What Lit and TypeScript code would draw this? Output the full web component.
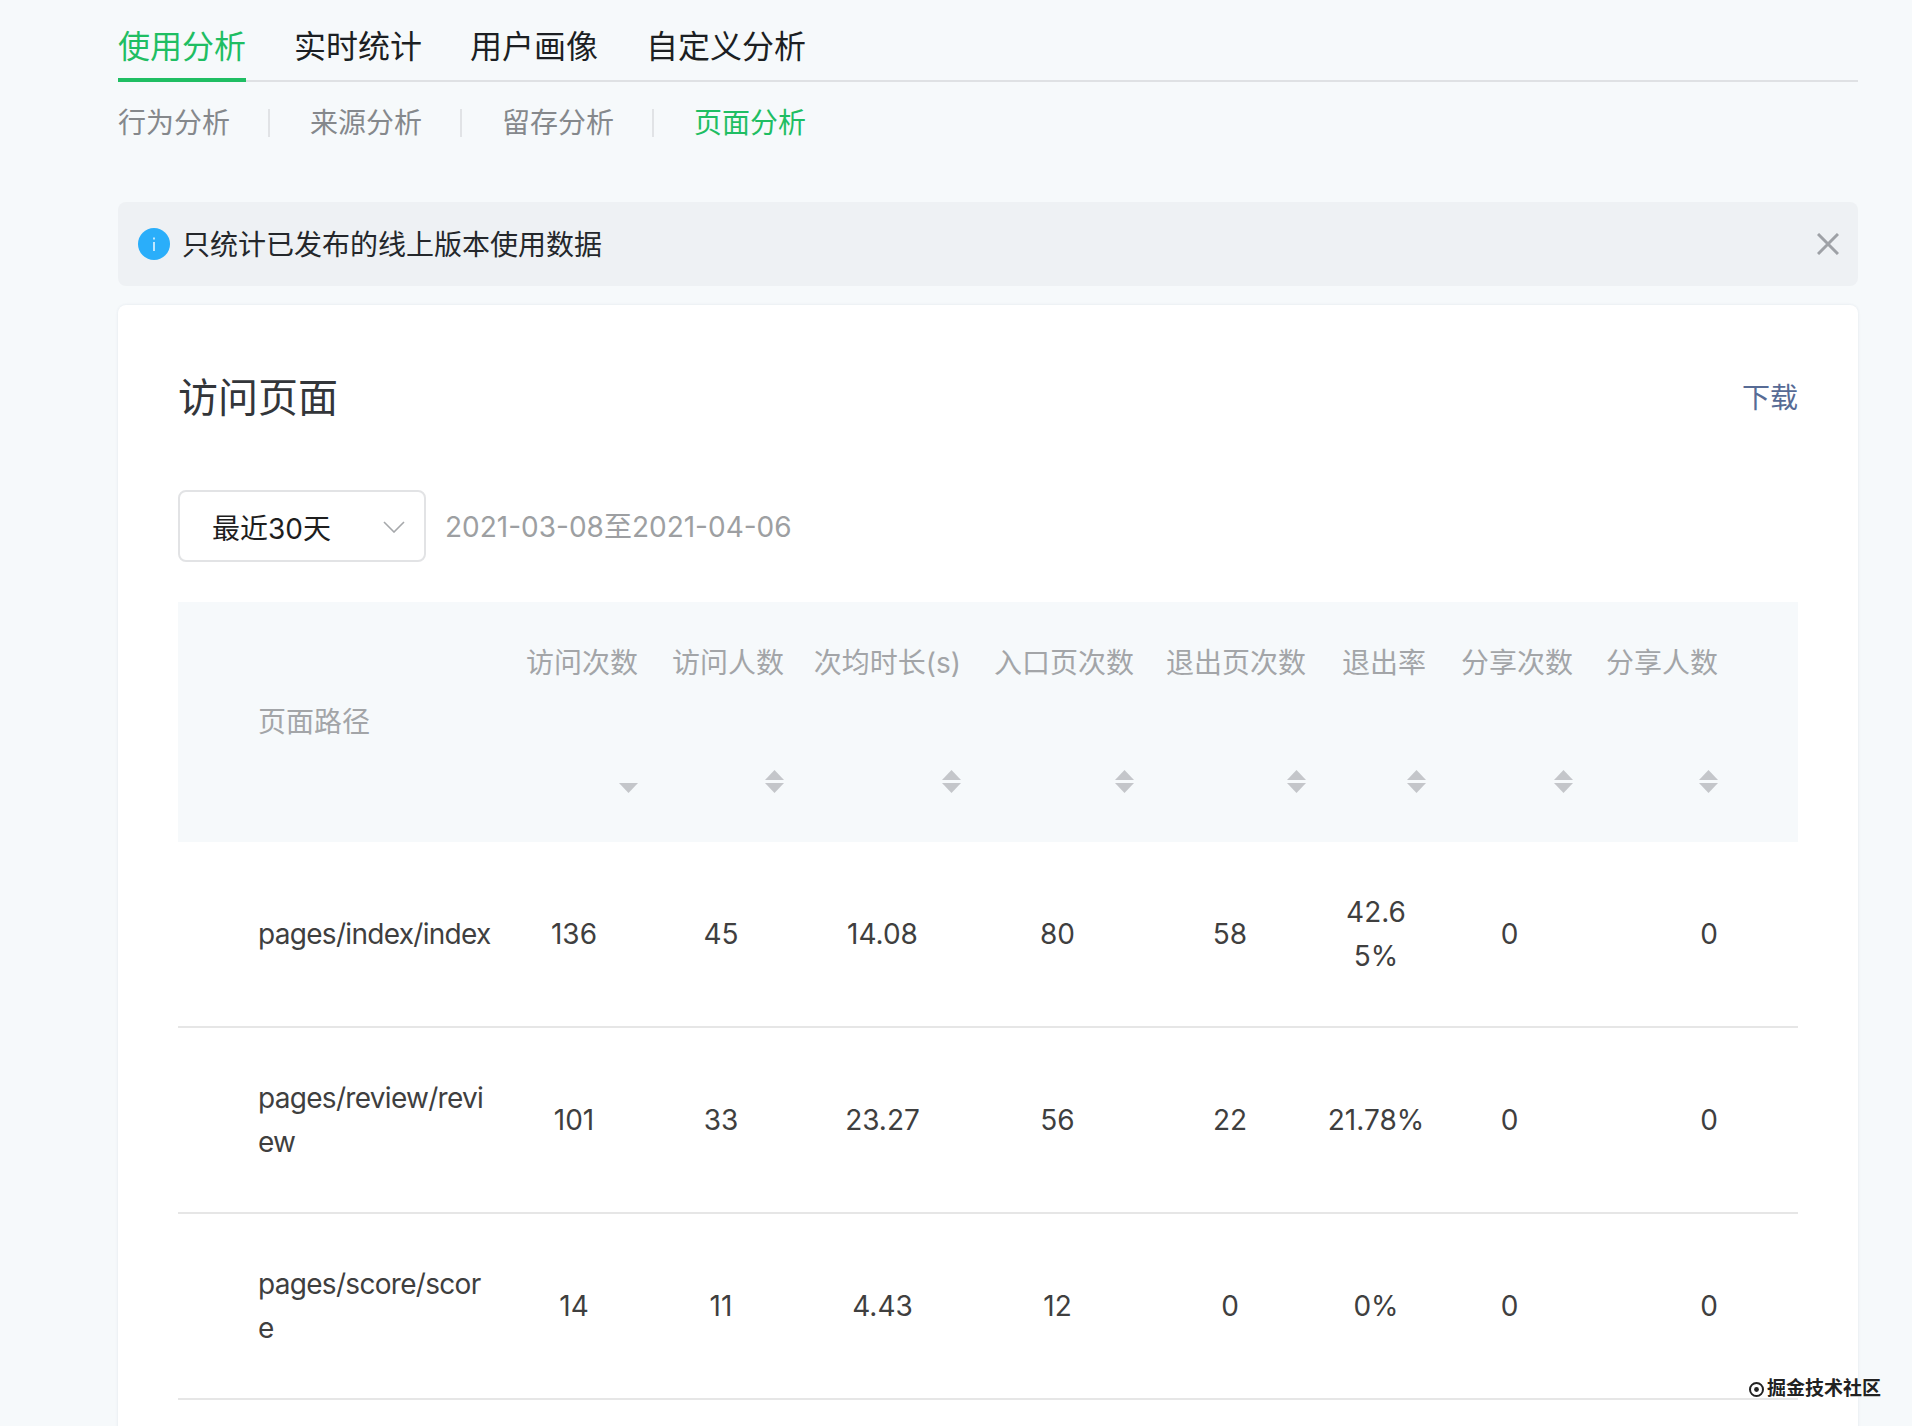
import { LitElement, html, css, svg } from "lit";
import { customElement } from "lit/decorators.js";

const HEADERS = ["访问次数", "访问人数", "次均时长(s)", "入口页次数", "退出页次数", "退出率", "分享次数", "分享人数"];
const ROWS = [
  ["pages/index/index", "136", "45", "14.08", "80", "58", "42.65%", "0", "0"],
  ["pages/review/review", "101", "33", "23.27", "56", "22", "21.78%", "0", "0"],
  ["pages/score/score", "14", "11", "4.43", "12", "0", "0%", "0", "0"],
];

@customElement("app-root")
export class AppRoot extends LitElement {
  static styles = css`
    :host {
      display: block;
      height: 1426px;
      overflow: hidden;
      position: relative;
      box-sizing: border-box;
      padding: 0 54px 0 118px;
      background: #f6f9fb;
      font-family: Inter, "Noto Sans CJK SC", sans-serif;
      color: #3f3f3f;
    }
    .tabs {
      display: flex;
      gap: 48px;
      padding-top: 25px;
      border-bottom: 2px solid #dfe1e4;
      font-size: 32px;
      line-height: 44px;
      color: #1c1f23;
    }
    .tab {
      padding-bottom: 9px;
      margin-bottom: -2px;
      border-bottom: 4px solid transparent;
    }
    .tab.on {
      color: #1fbe63;
      border-bottom-color: #1fbe63;
    }
    .subtabs {
      display: flex;
      align-items: center;
      gap: 39px;
      margin-top: 21px;
      font-size: 28px;
      line-height: 40px;
      color: #85888c;
    }
    .subtabs .on { color: #1fbe63; }
    .sep { width: 2px; height: 28px; background: #e1e3e6; margin-left: -1px; margin-right: 1px; }
    .alert {
      display: flex;
      align-items: center;
      height: 84px;
      margin-top: 59px;
      padding: 0 19px 0 20px;
      background: #eef1f4;
      border-radius: 8px;
      font-size: 28px;
      color: #24272b;
    }
    .alert .msg { flex: 1; margin: -2px 0 0 12px; }
    .alert svg { display: block; }
    .card {
      margin-top: 19px;
      height: 1300px;
      box-sizing: border-box;
      padding: 65px 60px 0;
      background: #fff;
      border-radius: 8px;
      box-shadow: 0 0 3px rgba(40, 70, 110, 0.1);
    }
    .head {
      display: flex;
      align-items: center;
      justify-content: space-between;
      line-height: 56px;
    }
    .title { font-size: 40px; color: #33363a; }
    .dl { font-size: 28px; color: #576b95; }
    .filter {
      display: flex;
      align-items: center;
      gap: 19px;
      margin-top: 64px;
    }
    .select {
      display: flex;
      align-items: center;
      justify-content: space-between;
      box-sizing: border-box;
      width: 248px;
      height: 72px;
      padding: 2px 19px 0 32px;
      border: 2px solid #e2e3e5;
      border-radius: 8px;
      font-size: 28px;
      color: #1e1e1e;
    }
    .date { font-size: 28px; color: #9d9fa2; margin-top: -2px; }
    table {
      width: 1620px;
      margin-top: 40px;
      table-layout: fixed;
      border-collapse: separate;
      border-spacing: 0;
      font-size: 28px;
      line-height: 44px;
    }
    th {
      padding: 39px 0 49px 20px;
      background: #f6f9fb;
      font-weight: 400;
      color: #a3a5a8;
      vertical-align: top;
    }
    th.path { padding: 40px 0 40px 80px; text-align: left; vertical-align: middle; }
    .th {
      display: flex;
      flex-direction: column;
      align-items: flex-end;
      white-space: nowrap;
    }
    .th svg { display: block; margin-top: 85px; }
    td {
      padding: 48px 0 48px 20px;
      border-bottom: 2px solid #e6e6e6;
      text-align: center;
      word-break: break-all;
    }
    td.path { padding-left: 80px; text-align: left; }
    .p { width: 237px; letter-spacing: -0.7px; }
    th.last, td.last { padding-right: 80px; text-align: right; }
    .c0 { width: 312px; } .c1 { width: 148px; } .c2 { width: 146px; }
    .c3 { width: 177px; } .c4 { width: 173px; } .c5 { width: 172px; }
    .c6 { width: 120px; } .c7 { width: 147px; } .c8 { width: 225px; }
    .mark {
      position: absolute;
      left: 1748px;
      top: 1376px;
      display: flex;
      align-items: center;
      gap: 2px;
      font-size: 19px;
      line-height: 26px;
      font-weight: 700;
      color: #222;
      text-shadow: 0 0 2px #fff, 0 0 2px #fff;
    }
  `;

  private sort(up: boolean) {
    return html`<svg width="19" height="23" viewBox="0 0 19 23">
      ${up ? svg`<path d="M9.5 0 19 10H0z" fill="#c4c6ca" />` : ""}
      <path d="M0 13h19l-9.5 10z" fill="#c4c6ca" />
    </svg>`;
  }

  render() {
    return html`
      <div class="tabs">
        <div class="tab on">使用分析</div>
        <div class="tab">实时统计</div>
        <div class="tab">用户画像</div>
        <div class="tab">自定义分析</div>
      </div>
      <div class="subtabs">
        <span>行为分析</span><i class="sep"></i>
        <span>来源分析</span><i class="sep"></i>
        <span>留存分析</span><i class="sep"></i>
        <span class="on">页面分析</span>
      </div>
      <div class="alert">
        <svg width="32" height="32" viewBox="0 0 32 32">
          <circle cx="16" cy="16" r="16" fill="#2aaefa" />
          <path d="M16 9.5v2M16 14v9" stroke="#fff" stroke-width="1.4" fill="none" />
        </svg>
        <span class="msg">只统计已发布的线上版本使用数据</span>
        <svg width="22" height="22" viewBox="0 0 22 22">
          <path d="M1 1l20 20M21 1 1 21" stroke="#9ea1a6" stroke-width="3" fill="none" />
        </svg>
      </div>
      <div class="card">
        <div class="head">
          <span class="title">访问页面</span>
          <span class="dl">下载</span>
        </div>
        <div class="filter">
          <div class="select">
            <span>最近30天</span>
            <svg width="22" height="12" viewBox="0 0 22 12">
              <path d="M1 1l10 10L21 1" stroke="#a6a8ab" stroke-width="1.6" fill="none" />
            </svg>
          </div>
          <span class="date">2021-03-08至2021-04-06</span>
        </div>
        <table>
          <colgroup>
            ${[0, 1, 2, 3, 4, 5, 6, 7, 8].map((i) => html`<col class="c${i}" />`)}
          </colgroup>
          <thead>
            <tr>
              <th class="path">页面路径</th>
              ${HEADERS.map(
                (h, i) => html`<th class=${i === 7 ? "last" : ""}>
                  <div class="th"><span>${h}</span>${this.sort(i !== 0)}</div>
                </th>`
              )}
            </tr>
          </thead>
          <tbody>
            ${ROWS.map(
              (r) => html`<tr>
                ${r.map((v, i) =>
                  i === 0
                    ? html`<td class="path"><div class="p">${v}</div></td>`
                    : html`<td class=${i === 8 ? "last" : ""}>${v}</td>`
                )}
              </tr>`
            )}
          </tbody>
        </table>
      </div>
      <div class="mark">
        <svg width="17" height="17" viewBox="0 0 17 17">
          <circle cx="8.5" cy="8.5" r="6.5" stroke="#222" stroke-width="2" fill="#fff" />
          <circle cx="8.5" cy="8.5" r="2.4" fill="#222" />
        </svg>
        <span>掘金技术社区</span>
      </div>
    `;
  }
}
